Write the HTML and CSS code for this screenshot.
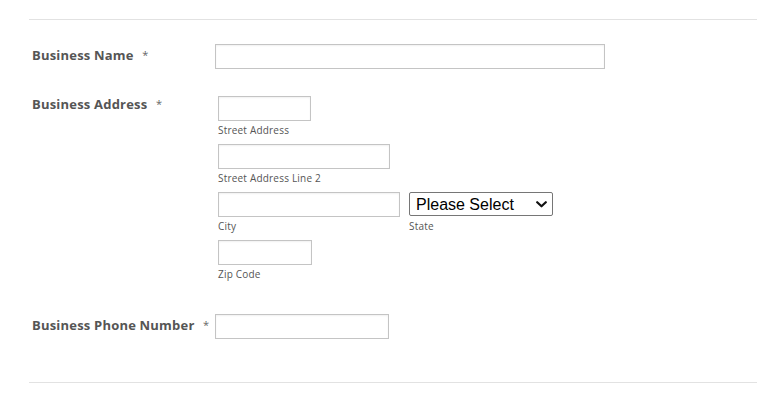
FILE: index.html
```html
<!DOCTYPE html>
<html lang="en">
<head>
<meta charset="utf-8">
<title>Business Form</title>
<link rel="stylesheet" href="styles.css">
</head>
<body>
<div class="form">
  <div class="rule"></div>
  <div class="rows">
    <div class="row">
      <label class="label">Business Name <span class="req">*</span></label>
      <div class="fields">
        <input class="input w-name" type="text">
      </div>
    </div>
    <div class="row">
      <label class="label">Business Address <span class="req">*</span></label>
      <div class="fields address">
        <div class="sub">
          <input class="input w-street" type="text">
          <span class="sublabel">Street Address</span>
        </div>
        <div class="sub">
          <input class="input w-line2" type="text">
          <span class="sublabel">Street Address Line 2</span>
        </div>
        <div class="pair">
          <div class="sub">
            <input class="input w-city" type="text">
            <span class="sublabel">City</span>
          </div>
          <div class="sub">
            <div class="select-wrap">
              <select class="select">
                <option>Please Select</option>
              </select>
              <svg class="chev" width="11" height="7" viewBox="0 0 11 7"><path d="M1.2 1.2 L5.5 5.3 L9.8 1.2" fill="none" stroke="#111" stroke-width="2.2" stroke-linecap="round" stroke-linejoin="round"/></svg>
            </div>
            <span class="sublabel">State</span>
          </div>
        </div>
        <div class="sub">
          <input class="input w-zip" type="text">
          <span class="sublabel">Zip Code</span>
        </div>
      </div>
    </div>
    <div class="row phone">
      <label class="label">Business Phone Number <span class="req">*</span></label>
      <div class="fields">
        <input class="input w-phone" type="text">
      </div>
    </div>
  </div>
  <div class="rule bottom"></div>
</div>
</body>
</html>
```

FILE: styles.css
```css
html, body {
  margin: 0;
  padding: 0;
  background: #fff;
}
body {
  font-family: "Open Sans", "Liberation Sans", sans-serif;
  color: #555;
}
.form {
  width: 728px;
  margin-left: 29px;
  padding-top: 19px;
}
.rule {
  height: 1px;
  background: #e2e2e2;
}
.rule.bottom {
  margin-top: 43px;
}
.rows {
  display: flex;
  flex-direction: column;
  gap: 24px;
  padding-top: 24px;
}
.row {
  display: grid;
  grid-template-columns: 186px 1fr;
  align-items: start;
}
.row.phone {
  margin-top: 2px;
}
.label {
  padding-left: 3px;
  padding-top: 1px;
  font-size: 13px;
  line-height: 20px;
  font-weight: 700;
  letter-spacing: 0.2px;
  color: #555;
  white-space: nowrap;
}
.req {
  font-size: 11px;
  font-weight: 400;
  margin-left: 5px;
  color: #666;
  vertical-align: 1px;
}
.fields {
  display: flex;
  flex-direction: column;
}
.address {
  padding: 3px 0 0 3px;
}
.input {
  box-sizing: border-box;
  height: 25px;
  margin: 0;
  border: 1px solid #c4c4c4;
  border-radius: 0;
  background: #fff;
  box-shadow: inset 0 1px 2px rgba(0, 0, 0, 0.06);
  padding: 0 4px;
  font-family: inherit;
  font-size: 13px;
  outline: none;
}
.w-name { width: 390px; }
.w-street { width: 93px; }
.w-line2 { width: 172px; }
.w-city { width: 182px; }
.w-zip { width: 94px; }
.w-phone { width: 174px; }
.sub {
  display: flex;
  flex-direction: column;
  align-items: flex-start;
  padding-bottom: 4px;
}
.sublabel {
  font-size: 10px;
  line-height: 19px;
  color: #555;
  letter-spacing: 0.2px;
}
.pair {
  display: flex;
  gap: 9px;
}
.select-wrap {
  position: relative;
  width: 144px;
  height: 25px;
}
.select {
  appearance: none;
  -webkit-appearance: none;
  box-sizing: border-box;
  width: 144px;
  height: 24px;
  margin: 0;
  border: 1px solid #767676;
  border-radius: 2px;
  background: #fff;
  padding: 0 0 0 6px;
  font-family: "Liberation Sans", Arial, sans-serif;
  font-size: 16px;
  color: #000;
  outline: none;
}
.chev {
  position: absolute;
  right: 6px;
  top: 9px;
  pointer-events: none;
}
```
